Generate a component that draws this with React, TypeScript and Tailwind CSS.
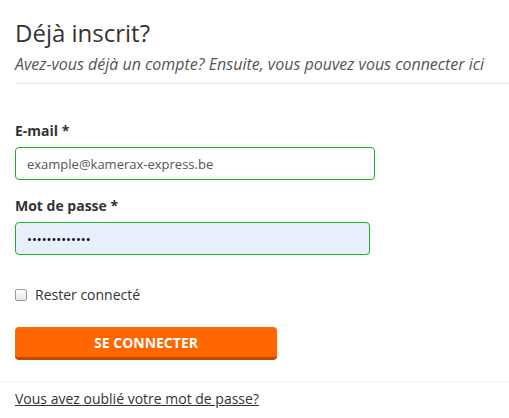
export default function App() {
  return (
    <div className="w-[509px] h-[418px] overflow-hidden bg-white text-[#333] font-['Open_Sans',sans-serif]">
      <div className="pl-[15px] pt-[16px]">
        <h1 className="text-[24px] leading-[34px] font-normal">Déjà inscrit?</h1>
        <p className="mt-[3px] text-[16px] leading-[22px] italic text-[#555] pb-[8px] border-b border-[#e5e5e5]">
          Avez-vous déjà un compte? Ensuite, vous pouvez vous connecter ici
        </p>
      </div>

      <form className="pl-[15px] pt-[37px]">
        <label className="block text-[14px] leading-[20px] font-bold mb-[6px]">E-mail *</label>
        <input
          type="text"
          defaultValue="example@kamerax-express.be"
          className="block w-[360px] h-[33px] px-[11px] text-[13px] text-[#555] border border-[#1ab31a] rounded-[4px] outline-none"
        />

        <label className="block mt-[16px] text-[14px] leading-[20px] font-bold mb-[6px]">Mot de passe *</label>
        <input
          type="password"
          defaultValue="kamerax-12345"
          className="block w-[355px] h-[33px] px-[11px] text-[13px] text-black bg-[#e8f0fe] border border-[#1ab31a] rounded-[4px] outline-none"
        />

        <label className="flex items-center gap-[8px] mt-[30px] text-[14px] leading-[20px] text-[#333]">
          <span className="w-[12px] h-[12px] border border-[#9a9a9a] rounded-[2px] bg-gradient-to-b from-white to-[#e6e6e6]" />
          Rester connecté
        </label>

        <button
          type="button"
          className="mt-[22px] w-[262px] h-[33px] rounded-[4px] bg-[#ff6600] text-white font-bold text-[14px] uppercase border-b-[3px] border-[#c24d00]"
        >
          Se connecter
        </button>
      </form>

      <div className="mt-[21px] pt-[4px] border-t border-[#f2f2f2] pl-[15px]">
        <a href="#" className="text-[14px] leading-[20px] text-[#333] underline">
          Vous avez oublié votre mot de passe?
        </a>
      </div>
    </div>
  );
}
